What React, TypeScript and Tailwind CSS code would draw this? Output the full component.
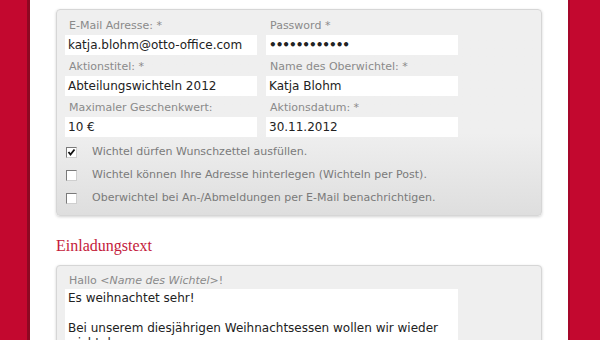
import React from "react";

const sans = { fontFamily: '"DejaVu Sans", Verdana, sans-serif' };

function Field({ label, value, password }: { label: string; value: string; password?: boolean }) {
  return (
    <div className="flex flex-col w-[192px]">
      <div className="h-[21px] pt-[5px] pl-[4px] text-[11px] leading-[13px] text-[#8a8a8a] whitespace-nowrap">{label}</div>
      <div
        className={
          "h-[20px] bg-white pl-[3px] text-[12px] leading-[20px] text-[#222] whitespace-nowrap " +
          (password ? "font-bold tracking-[-1px]" : "")
        }
      >
        {value}
      </div>
    </div>
  );
}

function Check({ checked, label }: { checked?: boolean; label: string }) {
  return (
    <div className="h-[23px] flex items-center">
      <div className="ml-[1px] w-[11px] h-[11px] bg-white border border-t-[#7a7a7a] border-l-[#7a7a7a] border-r-[#cfcfcf] border-b-[#cfcfcf] relative shrink-0">
        {checked && (
          <svg className="absolute left-[0px] top-[0px]" width="9" height="9" viewBox="0 0 9 9">
            <path d="M1.5 4 L3.5 6.5 L7.5 1.5" stroke="#111" strokeWidth="1.8" fill="none" />
          </svg>
        )}
      </div>
      <div className="ml-[15px] text-[11px] text-[#7a7a7a] whitespace-nowrap">{label}</div>
    </div>
  );
}

export default function App() {
  return (
    <div className="w-[600px] h-[340px] overflow-hidden flex bg-white" style={sans}>
      <div className="w-[27px] bg-[#c3082f] shrink-0" />
      <div className="w-[3px] bg-[#8e0822] shrink-0" />
      <div className="flex-1 bg-white px-[26px] pt-[9px]">
        <div className="rounded-[4px] border border-[#d6d6d6] shadow-[0_1px_3px_rgba(0,0,0,0.18)] bg-gradient-to-b from-[#efefef] from-60% to-[#dedede] px-[8px] pt-[4px] pb-[5px]">
          <div className="flex gap-[9px]">
            <Field label="E-Mail Adresse: *" value="katja.blohm@otto-office.com" />
            <Field label="Password *" value="••••••••••••" password />
          </div>
          <div className="flex gap-[9px]">
            <Field label="Aktionstitel: *" value="Abteilungswichteln 2012" />
            <Field label="Name des Oberwichtel: *" value="Katja Blohm" />
          </div>
          <div className="flex gap-[9px]">
            <Field label="Maximaler Geschenkwert:" value="10 €" />
            <Field label="Aktionsdatum: *" value="30.11.2012" />
          </div>
          <div className="pt-[4px]">
            <Check checked label="Wichtel dürfen Wunschzettel ausfüllen." />
            <Check label="Wichtel können Ihre Adresse hinterlegen (Wichteln per Post)." />
            <Check label="Oberwichtel bei An-/Abmeldungen per E-Mail benachrichtigen." />
          </div>
        </div>

        <div
          className="mt-[20px] h-[20px] text-[16px] leading-[20px] text-[#c41a3b]"
          style={{ fontFamily: '"Liberation Serif", Georgia, serif' }}
        >
          Einladungstext
        </div>

        <div className="mt-[9px] rounded-[4px] border border-[#d6d6d6] shadow-[0_1px_3px_rgba(0,0,0,0.18)] bg-[#efefef] px-[8px] pt-[4px] h-[120px]">
          <div className="h-[19px] pt-[4px] pl-[4px] text-[11px] leading-[13px] text-[#8a8a8a] whitespace-nowrap">
            Hallo <i>&lt;Name des Wichtel&gt;</i>!
          </div>
          <div className="w-[393px] h-[100px] bg-white pl-[3px] pt-[2px] text-[12px] leading-[15px] text-[#222]">
            <div className="whitespace-nowrap">Es weihnachtet sehr!</div>
            <div className="h-[15px]" />
            <div className="whitespace-nowrap">Bei unserem diesjährigen Weihnachtsessen wollen wir wieder</div>
            <div className="whitespace-nowrap">wichteln.</div>
          </div>
        </div>
      </div>
      <div className="w-[2px] bg-[#a5082a] shrink-0" />
      <div className="w-[30px] bg-[#c3082f] shrink-0" />
    </div>
  );
}
